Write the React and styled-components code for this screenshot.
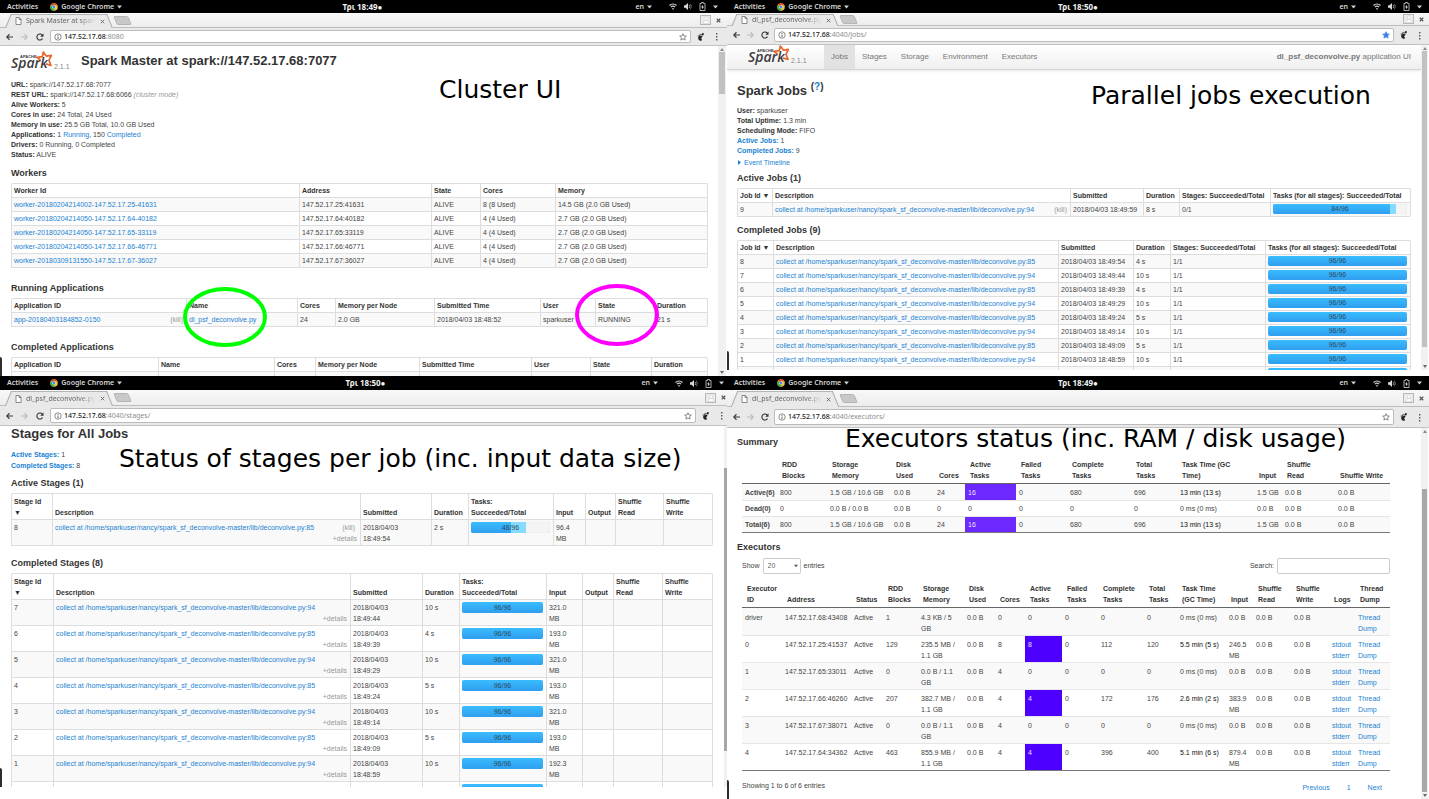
import React from "react";
import styled, { createGlobalStyle, css } from "styled-components";

const GlobalStyle = createGlobalStyle`
  * { box-sizing: border-box; }
  body { margin: 0; background: #fff; }
  button, input, select { font: inherit; color: inherit; }
`;

const LINK = "#1a82d2";
const UI_FONT = `"Noto Sans", "Open Sans", sans-serif`;
const PAGE_FONT = `"Liberation Sans", Arial, sans-serif`;

/* ---------- page frame ---------- */

const Board = styled.main`
  display: grid;
  grid-template-columns: minmax(0, 727fr) minmax(0, 702fr);
  grid-template-rows: minmax(0, 376fr) minmax(0, 423fr);
  height: 100vh;
  background: #fff;
`;

const Screen = styled.section`
  position: relative;
  display: flex;
  flex-direction: column;
  min-width: 0;
  overflow: hidden;
  background: #fff;
`;

const Caption = styled.h1`
  position: absolute;
  top: ${(p) => p.$top}px;
  left: ${(p) => p.$left}px;
  margin: 0;
  font: 400 25px/30px "DejaVu Sans", sans-serif;
  color: #000;
  white-space: nowrap;
`;

const Ring = styled.svg`
  position: absolute;
  top: ${(p) => p.$top}px;
  left: ${(p) => p.$left}px;
  overflow: visible;
`;

const EdgeMark = styled.span`
  position: absolute;
  left: 0;
  bottom: ${(p) => p.$bottom}px;
  width: 2px;
  height: 19px;
  border-radius: 0 2px 0 0;
  background: #2c2f30;
`;

/* ---------- desktop top bar ---------- */

const TopBar = styled.header`
  flex: none;
  display: grid;
  grid-template-columns: 1fr auto 1fr;
  align-items: center;
  height: ${(p) => p.$h}px;
  padding: 0 ${(p) => p.$end}px 0 7px;
  background: #000;
  color: #d6d6d6;
  font: 600 7px/12px ${UI_FONT};
`;

const BarGroup = styled.div`
  display: flex;
  align-items: center;
  justify-content: ${(p) => (p.$right ? "flex-end" : "flex-start")};
  gap: ${(p) => p.$gap}px;
`;

const BarButton = styled.button`
  display: flex;
  align-items: center;
  gap: 3px;
  padding: 0;
  border: 0;
  background: none;
  white-space: nowrap;
`;

const Language = styled(BarButton)`
  margin-right: 10px;
`;

const Clock = styled.time`
  color: #f2f2f2;
  font-size: 8px;
  font-weight: 700;
  white-space: nowrap;
`;

/* ---------- browser chrome ---------- */

const TabStrip = styled.div`
  flex: none;
  display: flex;
  align-items: center;
  height: ${(p) => p.$h}px;
  padding: 0 ${(p) => p.$end}px 0 ${(p) => p.$start}px;
  background: linear-gradient(#f8f8f8, #ededed);
  border-bottom: 1px solid #bdbdbd;
`;

const Tab = styled.div`
  position: relative;
  isolation: isolate;
  display: flex;
  align-items: center;
  gap: 4px;
  align-self: stretch;
  width: 102px;
  margin-bottom: -1px;
  padding: 1px 5px 0 7px;
  color: #666;
  font: 400 7px/12px ${UI_FONT};
  &::before,
  &::after {
    content: "";
    position: absolute;
    z-index: -1;
    top: 1px;
    bottom: 0;
    background: #e9e9e9;
    border-top: 1px solid #b5b5b5;
  }
  &::before {
    left: 0;
    right: 40%;
    border-left: 1px solid #a9a9a9;
    transform: skewX(-22deg);
  }
  &::after {
    left: 40%;
    right: 0;
    border-right: 1px solid #a9a9a9;
    transform: skewX(22deg);
  }
`;

const TabTitle = styled.span`
  flex: 1;
  overflow: hidden;
  white-space: nowrap;
  mask-image: linear-gradient(90deg, #000 75%, transparent);
`;

const IconButton = styled.button`
  display: flex;
  padding: 0;
  border: 0;
  background: none;
`;

const NewTab = styled.button`
  width: 15px;
  height: 9px;
  margin-left: 5px;
  padding: 0;
  border: 1px solid #b5b5b5;
  border-radius: 2px;
  background: #c8c8c8;
  transform: skewX(22deg);
`;

const WindowTools = styled.div`
  display: flex;
  align-items: center;
  gap: 5px;
  margin-left: auto;
`;

const Avatar = styled.button`
  display: flex;
  align-items: center;
  justify-content: center;
  width: 11px;
  height: 10px;
  padding: 0;
  border: 1px solid #b8b8b8;
  background: #ececec;
`;

const Toolbar = styled.div`
  flex: none;
  display: flex;
  align-items: center;
  gap: ${(p) => p.$gap}px;
  height: ${(p) => p.$h}px;
  padding-left: 6px;
  background: #e9e9e9;
  border-bottom: 1px solid #c2c2c2;
`;

const UrlBox = styled.form`
  flex: 1;
  display: flex;
  align-items: center;
  align-self: stretch;
  gap: 2px;
  margin: 2px 0 2px -2px;
  padding: 0 3px;
  border: 1px solid #bcbcbc;
  border-radius: 2px;
  background: #fff;
  font: 400 7px/12px ${UI_FONT};
`;

const UrlText = styled.span`
  flex: 1;
  color: #8c8c8c;
  b { color: #222; font-weight: 500; }
`;

const ToolTail = styled.div`
  display: flex;
  align-items: center;
  gap: 11px;
  width: ${(p) => p.$w}px;
  margin-left: -${(p) => p.$pull}px;
  padding-left: 6px;
`;

/* ---------- page view ---------- */

const View = styled.div`
  flex: 1;
  display: flex;
  min-height: 0;
  margin-bottom: ${(p) => p.$cut || 0}px;
`;

const Page = styled.div`
  flex: 1;
  min-width: 0;
  overflow: hidden;
  font: 400 7px/10px ${PAGE_FONT};
  color: #444;
`;

const Content = styled.div`
  padding: ${(p) => p.$top}px ${(p) => p.$right}px 0 ${(p) => p.$left}px;
`;

const Scrollbar = styled.div`
  flex: none;
  display: flex;
  flex-direction: column;
  align-items: center;
  justify-content: space-between;
  width: ${(p) => p.$w}px;
  margin-right: ${(p) => p.$gap}px;
  padding: 2px 0;
  background: #f1f1f1;
`;

const Thumb = styled.span`
  align-self: stretch;
  flex: ${(p) => p.$share} 0 0;
  margin: 0 ${(p) => p.$inset}px;
  background: ${(p) => p.$color};
`;

const Space = styled.span`
  flex: ${(p) => p.$share} 0 0;
`;

/* ---------- spark page pieces ---------- */

const A = styled.a`
  color: ${(p) => (p.$muted ? "#999" : LINK)};
  text-decoration: none;
`;

const MasterHead = styled.div`
  display: flex;
  align-items: center;
  height: 30px;
  margin-bottom: 4px;
`;

const Brand = styled.div`
  display: flex;
  align-items: flex-end;
  gap: 2px;
  width: 70px;
  color: #888;
`;

const PageTitle = styled.h2`
  margin: 0 0 ${(p) => p.$after || 0}px;
  font: 700 13px/16px ${PAGE_FONT};
  color: #333;
  sup { font-size: 10px; line-height: 0; }
`;

const Facts = styled.ul`
  margin: 0 0 ${(p) => p.$after}px;
  padding: 0;
  list-style: none;
  line-height: ${(p) => p.$line}px;
  b { color: #333; }
  em { color: #999; }
`;

const Heading = styled.h3`
  margin: ${(p) => p.$gap || 0}px 0 0;
  font: 700 9px/20px ${PAGE_FONT};
  color: #333;
`;

const Navbar = styled.nav`
  display: flex;
  align-items: stretch;
  height: 25px;
  padding: 0 10px 0 21px;
  border-bottom: 1px solid #d4d4d4;
  background: linear-gradient(#fff, #efefef);
  box-shadow: 0 1px 3px #0000001a;
  font-size: 8px;
`;

const NavBrand = styled.div`
  display: flex;
  align-items: flex-end;
  gap: 2px;
  width: 76px;
  padding-bottom: 3px;
  color: #888;
  font-size: 7px;
`;

const NavLink = styled.a`
  display: flex;
  align-items: center;
  padding: 0 7px;
  color: #777;
  text-decoration: none;
  background: ${(p) => (p.$active ? "#e2e2e2" : "none")};
`;

const AppName = styled.p`
  margin: 0 0 0 auto;
  align-self: center;
  color: #777;
`;

const DataTable = styled.table`
  width: 100%;
  table-layout: fixed;
  border-spacing: 0;
  border: 1px solid #ddd;
  border-left: 0;
  border-bottom: 0;
  border-radius: 2px;
  line-height: ${(p) => p.$line}px;
  th,
  td {
    padding: ${(p) => p.$pad}px 3px ${(p) => p.$pad - 1}px 2px;
    border-left: 1px solid #ddd;
    border-bottom: 1px solid #ddd;
    text-align: left;
    white-space: nowrap;
  }
  th { color: #333; vertical-align: bottom; }
  td { vertical-align: top; }
  tbody tr:nth-child(odd) { background: #f9f9f9; }
`;

const Col = styled.col`
  ${(p) => p.$w && css`width: ${p.$w}px;`}
`;

const Spread = styled.span`
  display: flex;
  justify-content: space-between;
  padding-right: ${(p) => p.$end || 0}px;
`;

const Details = styled.button`
  display: block;
  margin-left: auto;
  padding: 0;
  border: 0;
  background: none;
  color: #999;
  line-height: inherit;
`;

const Track = styled.div`
  position: relative;
  height: ${(p) => p.$h}px;
  overflow: hidden;
  border-radius: 2px;
  background: #f4f4f4;
  box-shadow: inset 0 0 1px #0003;
  text-align: center;
  line-height: ${(p) => p.$h}px;
`;

const Fill = styled.span`
  position: absolute;
  inset: 0 auto 0 0;
  background: ${(p) => (p.$started ? "#86dcff" : "linear-gradient(#39bcff, #309eee)")};
`;

const FillLabel = styled.span`
  position: relative;
  color: #2d4a62;
`;

const PlainTable = styled.table`
  width: 100%;
  table-layout: fixed;
  border-spacing: 0;
  border-bottom: 1px solid #777;
  line-height: 11px;
  th,
  td { text-align: left; vertical-align: top; white-space: nowrap; }
  thead th {
    padding: 1px 0 2px 5px;
    border-bottom: 1px solid #666;
    color: #333;
    vertical-align: bottom;
  }
  tbody th,
  tbody td {
    padding: ${(p) => p.$pad}px 0 ${(p) => 4 - p.$pad}px 3px;
    border-top: 1px solid #e6e6e6;
  }
  tbody tr:first-child > * { border-top-color: transparent; }
  tbody tr:nth-child(odd) { background: #f9f9f9; }
`;

const HotCell = styled.td`
  background: ${(p) => p.$tone};
  color: #ece4ff;
`;

const TimeCell = styled.td`
  color: ${(p) => (p.$strong ? "#111" : "#444")};
`;

const Controls = styled.div`
  display: flex;
  justify-content: space-between;
  height: 16px;
  margin-bottom: 8px;
`;

const Field = styled.label`
  display: flex;
  align-items: center;
  gap: 3px;
`;

const Select = styled.select`
  width: 38px;
  height: 16px;
  padding: 0 0 0 4px;
  border: 1px solid #ccc;
  border-radius: 2px;
  background: #fff;
  color: #666;
  appearance: none;
`;

const SelectWrap = styled.span`
  position: relative;
  display: flex;
  svg { position: absolute; right: 3px; top: 6px; pointer-events: none; }
`;

const SearchBox = styled.input`
  width: 113px;
  height: 16px;
  border: 1px solid #ccc;
  border-radius: 2px;
`;

const Footer = styled.div`
  display: flex;
  justify-content: space-between;
  padding-top: 10px;
`;

const Pager = styled.nav`
  display: flex;
  gap: 17px;
  padding: 2px 8px 0 0;
`;

/* ---------- icons ---------- */

const Caret = ({ color = "#cfcfcf", w = 5 }) => (
  <svg width={w} height="4" viewBox="0 0 5 4" aria-hidden="true">
    <path d="M0 .4h5L2.500 3.600z" fill={color} />
  </svg>
);

const ChromeIcon = () => (
  <svg width="8" height="8" viewBox="0 0 16 16" aria-hidden="true">
    <circle cx="8" cy="8" r="7.600" fill="#f6c324" />
    <path d="M8 8 1.400 4.200A7.600 7.600 0 0 1 14.800 4.600H8z" fill="#dd4b3a" />
    <path d="M8 8 1.400 4.200A7.600 7.600 0 0 0 7 15.500L11 9.500z" fill="#3aa757" />
    <circle cx="8" cy="8" r="3.600" fill="#fff" />
    <circle cx="8" cy="8" r="2.800" fill="#4688f1" />
  </svg>
);

const WifiIcon = () => (
  <svg width="8" height="7" viewBox="0 0 16 14" aria-hidden="true">
    <path d="M1 5a10 10 0 0 1 14 0" fill="none" stroke="#d0d0d0" strokeWidth="2.600" />
    <path d="M4 8a6 6 0 0 1 8 0" fill="none" stroke="#d0d0d0" strokeWidth="2.400" />
    <path d="M8 14 5.500 10.500h5z" fill="#d0d0d0" />
  </svg>
);

const VolumeIcon = () => (
  <svg width="8" height="7" viewBox="0 0 16 14" aria-hidden="true">
    <path d="M0 4.500h3L8 0v14L3 9.500H0z" fill="#d8d8d8" />
    <path d="M10 4a4 4 0 0 1 0 6" fill="none" stroke="#bbb" strokeWidth="1.800" />
    <path d="M12.500 1.500a8 8 0 0 1 0 11" fill="none" stroke="#777" strokeWidth="1.800" />
  </svg>
);

const BatteryIcon = () => (
  <svg width="7" height="9" viewBox="0 0 14 18" aria-hidden="true">
    <path d="M5 1h4v2h3v14H2V3h3z" fill="none" stroke="#bdbdbd" strokeWidth="1.800" />
    <path d="M8 5.500 4 10.500h2.500L6 14.500l4-5H7.500z" fill="#eee" />
  </svg>
);

const FileIcon = () => (
  <svg width="7" height="8" viewBox="0 0 14 16" aria-hidden="true">
    <path d="M2 1h6.500L12 4.500V15H2z M8 1v4h4" fill="#fff" stroke="#6e6e6e" strokeWidth="1.600" />
  </svg>
);

const CrossIcon = ({ w = 1.6 }) => (
  <svg width="5" height="5" viewBox="0 0 10 10" aria-hidden="true">
    <path d="M1.500 1.500l7 7M8.500 1.500l-7 7" stroke="#555" strokeWidth={w} />
  </svg>
);

const ArrowIcon = ({ flip }) => (
  <svg width="7" height="8" viewBox="0 0 14 16" aria-hidden="true">
    <path
      d={flip ? "M0 8h12M7 2.500 12.500 8 7 13.500" : "M14 8H2M7 2.500 1.500 8 7 13.500"}
      fill="none"
      stroke={flip ? "#bcbcbc" : "#3a3a3a"}
      strokeWidth="2.200"
    />
  </svg>
);

const ReloadIcon = () => (
  <svg width="8" height="8" viewBox="0 0 16 16" aria-hidden="true">
    <path d="M13 11a6 6 0 1 1 0-6" fill="none" stroke="#333" strokeWidth="2.200" />
    <path d="M15 1v6.500H8.500z" fill="#333" />
  </svg>
);

const InfoIcon = () => (
  <svg width="8" height="8" viewBox="0 0 16 16" aria-hidden="true">
    <circle cx="8" cy="8" r="6.400" fill="none" stroke="#666" strokeWidth="1.500" />
    <path d="M8 7v5M8 4v1.800" stroke="#555" strokeWidth="1.800" />
  </svg>
);

const StarIcon = ({ on }) => (
  <svg width="8" height="8" viewBox="0 0 16 16" aria-hidden="true">
    <path
      d="M8 1.500l1.900 4.400 4.800.4-3.600 3.200 1.100 4.700L8 11.700l-4.200 2.500 1.100-4.700L1.300 6.300l4.800-.4z"
      fill={on ? "#3b7de0" : "#fff"}
      stroke={on ? "#3b7de0" : "#666"}
      strokeWidth="1.500"
    />
  </svg>
);

const FootIcon = () => (
  <svg width="7" height="8" viewBox="0 0 14 16" aria-hidden="true">
    <path d="M10.500 6C8 4.600 2 6 2.200 10c.2 3 2.600 5.600 5 5.600 2 0 3-1.600 2.600-2.800-.5-1.200-2-1-1.600-2.200.5-1.200 3.600-2 2.300-4.600z" fill="#222" />
    <ellipse cx="11.600" cy="2.600" rx="1.900" ry="2.500" fill="#222" transform="rotate(15 11.600 2.600)" />
    <ellipse cx="7.800" cy="3.200" rx="1.200" ry="1.700" fill="#222" />
    <ellipse cx="4.900" cy="4.300" rx="1" ry="1.500" fill="#222" />
    <ellipse cx="2.300" cy="6" rx=".9" ry="1.300" fill="#222" />
  </svg>
);

const DotsIcon = () => (
  <svg width="3" height="9" viewBox="0 0 3 9" aria-hidden="true">
    <path d="M1 1h1.400v1.400H1zM1 4h1.400v1.400H1zM1 7h1.400v1.400H1z" fill="#555" />
  </svg>
);

const PersonIcon = () => (
  <svg width="8" height="8" viewBox="0 0 16 16" aria-hidden="true">
    <circle cx="8" cy="5" r="3.500" fill="#fff" stroke="#c4c4c4" />
    <path d="M2 15c0-8 12-8 12 0z" fill="#fff" stroke="#c4c4c4" />
  </svg>
);

const SparkLogo = () => (
  <svg width="41" height="21" viewBox="0 0 41 21" role="img" aria-label="Apache Spark">
    <path
      d="M29.500 9 26 6.300l5.300-.6L32.300 1l3.200 4.200 5-.8-2.500 4.800 2 5.300-5-1.600"
      fill="#fff"
      stroke="#e8662c"
      strokeWidth="1.700"
      strokeLinejoin="round"
    />
    <text x="0" y="17" fontFamily="Open Sans, Noto Sans, sans-serif" fontStyle="italic" fontWeight="600" fontSize="14" fill="#3c3a3e">
      Spark
    </text>
    <text x="9" y="7" fontFamily="Liberation Sans, sans-serif" fontWeight="700" fontSize="4" fill="#3c3a3e">
      APACHE
    </text>
  </svg>
);

/* ---------- shared composites ---------- */

function Browser({ caption, time, title, host = "147.52.17.68", path, starred, size, children }) {
  return (
    <Screen aria-label={caption}>
      <TopBar $h={size.bar} $end={size.end}>
        <BarGroup $gap={12}>
          <BarButton>Activities</BarButton>
          <BarButton><ChromeIcon />Google Chrome<Caret /></BarButton>
        </BarGroup>
        <Clock>{time}●</Clock>
        <BarGroup $right $gap={7}>
          <Language>en<Caret /></Language>
          <WifiIcon />
          <VolumeIcon />
          <BatteryIcon />
          <Caret />
        </BarGroup>
      </TopBar>
      <TabStrip $h={size.tabs} $start={size.gap} $end={size.close}>
        <Tab>
          <FileIcon />
          <TabTitle>{title}</TabTitle>
          <IconButton aria-label="Close tab"><CrossIcon /></IconButton>
        </Tab>
        <NewTab aria-label="New tab" />
        <WindowTools>
          <Avatar aria-label="Profile"><PersonIcon /></Avatar>
          <IconButton aria-label="Close window"><CrossIcon w={2.4} /></IconButton>
        </WindowTools>
      </TabStrip>
      <Toolbar $h={size.tool} $gap={size.gap}>
        <IconButton aria-label="Back"><ArrowIcon /></IconButton>
        <IconButton aria-label="Forward"><ArrowIcon flip /></IconButton>
        <IconButton aria-label="Reload"><ReloadIcon /></IconButton>
        <UrlBox>
          <InfoIcon />
          <UrlText><b>{host}</b>{path}</UrlText>
          <StarIcon on={starred} />
        </UrlBox>
        <ToolTail $w={size.tail} $pull={size.gap}>
          <FootIcon />
          <DotsIcon />
        </ToolTail>
      </Toolbar>
      {children}
    </Screen>
  );
}

function Scroll({ before, share, after, color = "#c1c1c1", w = 8, gap = 1, inset = 1, arrows = true }) {
  return (
    <Scrollbar $w={w} $gap={gap}>
      {arrows && <svg width="4" height="3" viewBox="0 0 4 3"><path d="M0 3h4L2 0z" fill="#888" /></svg>}
      <Space $share={before} />
      <Thumb $share={share} $color={color} $inset={inset} />
      <Space $share={after} />
      {arrows && <svg width="4" height="3" viewBox="0 0 4 3"><path d="M0 0h4L2 3z" fill="#666" /></svg>}
    </Scrollbar>
  );
}

function Grid({ cols, heads, rows, line, pad }) {
  return (
    <DataTable $line={line} $pad={pad}>
      <colgroup>{cols.map((w, i) => <Col key={i} $w={w} />)}</colgroup>
      <thead><tr>{heads.map((h, i) => <th key={i} scope="col">{h}</th>)}</tr></thead>
      <tbody>
        {rows.map((r, i) => <tr key={i}>{r.map((c, j) => <td key={j}>{c}</td>)}</tr>)}
      </tbody>
    </DataTable>
  );
}

function Progress({ done, running = 0, total = 96, h }) {
  return (
    <Track $h={h}>
      {running > 0 && <Fill $started style={{ width: `${((done + running) / total) * 100}%` }} />}
      <Fill style={{ width: `${(done / total) * 100}%` }} />
      <FillLabel>{done}/{total}</FillLabel>
    </Track>
  );
}

const two = (a, b) => <>{a}<br />{b}</>;
const collect = (line) => (
  <A href="#job">collect at /home/sparkuser/nancy/spark_sf_deconvolve-master/lib/deconvolve.py:{line}</A>
);

/* ---------- cluster page ---------- */

const workers = [
  ["20180204214002", "147.52.17.25", "41631", "8 (8 Used)", "14.5 GB (2.0 GB Used)"],
  ["20180204214050", "147.52.17.64", "40182", "4 (4 Used)", "2.7 GB (2.0 GB Used)"],
  ["20180204214050", "147.52.17.65", "33119", "4 (4 Used)", "2.7 GB (2.0 GB Used)"],
  ["20180204214050", "147.52.17.66", "46771", "4 (4 Used)", "2.7 GB (2.0 GB Used)"],
  ["20180309131550", "147.52.17.67", "36027", "4 (4 Used)", "2.7 GB (2.0 GB Used)"],
];
const appHeads = ["Application ID", "Name", "Cores", "Memory per Node", "Submitted Time", "User", "State", "Duration"];

function ClusterScreen() {
  return (
    <Browser
      caption="Cluster UI" time="Τρι 18:49" title="Spark Master at spark" path=":8080"
      size={{ bar: 13, tabs: 15, tool: 18, gap: 8, end: 9, close: 6, tail: 36 }}
    >
      <View>
        <Page>
          <Content $top={0} $left={11} $right={10}>
            <MasterHead>
              <Brand><SparkLogo />2.1.1</Brand>
              <PageTitle>Spark Master at spark://147.52.17.68:7077</PageTitle>
            </MasterHead>
            <Facts $line={10} $after={3}>
              <li><b>URL:</b> spark://147.52.17.68:7077</li>
              <li><b>REST URL:</b> spark://147.52.17.68:6066 <em>(cluster mode)</em></li>
              <li><b>Alive Workers:</b> 5</li>
              <li><b>Cores in use:</b> 24 Total, 24 Used</li>
              <li><b>Memory in use:</b> 25.5 GB Total, 10.0 GB Used</li>
              <li><b>Applications:</b> 1 <A href="#running">Running</A>, 150 <A href="#completed">Completed</A></li>
              <li><b>Drivers:</b> 0 Running, 0 Completed</li>
              <li><b>Status:</b> ALIVE</li>
            </Facts>
            <Heading>Workers</Heading>
            <Grid
              line={12} pad={1} cols={[null, 132, 49, 75, 152]}
              heads={["Worker Id", "Address", "State", "Cores", "Memory"]}
              rows={workers.map(([stamp, ip, port, cores, mem]) => [
                <A href="#worker">worker-{stamp}-{ip}-{port}</A>, `${ip}:${port}`, "ALIVE", cores, mem,
              ])}
            />
            <Heading $gap={10}>Running Applications</Heading>
            <Grid
              line={12} pad={1} cols={[null, 111, 38, 99, 106, 55, 59, 53]}
              heads={appHeads}
              rows={[[
                <Spread><A href="#app">app-20180403184852-0150</A><A $muted href="#kill">(kill)</A></Spread>,
                <A href="#name">dl_psf_deconvolve.py</A>, "24", "2.0 GB", "2018/04/03 18:48:52", "sparkuser", "RUNNING", "21 s",
              ]]}
            />
            <Heading $gap={10}>Completed Applications</Heading>
            <Grid
              line={12} pad={1} cols={[null, 116, 41, 104, 112, 59, 61, 56]}
              heads={appHeads}
              rows={[[
                <A href="#app">app-20180403184622-0149</A>, "dl_psf_deconvolve.py", "24", "2.0 GB",
                "2018/04/03 18:46:22", "sparkuser", "FINISHED", "1.3 min",
              ]]}
            />
          </Content>
        </Page>
        <Scroll before={1} share={42} after={277} />
      </View>
      <Ring width="84" height="60" $top={287} $left={183} aria-hidden="true">
        <ellipse cx="42" cy="30" rx="40" ry="28" fill="none" stroke="#00ff00" strokeWidth="4" />
      </Ring>
      <Ring width="84" height="62" $top={284} $left={575} aria-hidden="true">
        <ellipse cx="42" cy="31" rx="40" ry="29" fill="none" stroke="#ff00ff" strokeWidth="4" />
      </Ring>
      <Caption $top={75} $left={439}>Cluster UI</Caption>
      <EdgeMark $bottom={0} />
    </Browser>
  );
}

/* ---------- jobs page ---------- */

const jobHeads = ["Job Id ▼", "Description", "Submitted", "Duration", "Stages: Succeeded/Total", "Tasks (for all stages): Succeeded/Total"];
const jobs = [
  [8, 85, "49:54", "4 s"], [7, 94, "49:44", "10 s"], [6, 85, "49:39", "4 s"], [5, 94, "49:29", "10 s"],
  [4, 85, "49:24", "5 s"], [3, 94, "49:14", "10 s"], [2, 85, "49:09", "5 s"], [1, 94, "48:59", "10 s"], [0, 85, "48:54", "5 s"],
];

function JobsScreen() {
  return (
    <Browser
      caption="Parallel jobs execution" time="Τρι 18:50" title="dl_psf_deconvolve.py" path=":4040/jobs/" starred
      size={{ bar: 13, tabs: 13, tool: 19, gap: 7, end: 7, close: 5, tail: 35 }}
    >
      <View $cut={6}>
        <Page>
          <Navbar>
            <NavBrand><SparkLogo />2.1.1</NavBrand>
            <NavLink $active href="#jobs">Jobs</NavLink>
            <NavLink href="#stages">Stages</NavLink>
            <NavLink href="#storage">Storage</NavLink>
            <NavLink href="#environment">Environment</NavLink>
            <NavLink href="#executors">Executors</NavLink>
            <AppName><b>dl_psf_deconvolve.py</b> application UI</AppName>
          </Navbar>
          <Content $top={13} $left={10} $right={10}>
            <PageTitle $after={7}>Spark Jobs <sup>(<A href="#help">?</A>)</sup></PageTitle>
            <Facts $line={10} $after={2}>
              <li><b>User:</b> sparkuser</li>
              <li><b>Total Uptime:</b> 1.3 min</li>
              <li><b>Scheduling Mode:</b> FIFO</li>
              <li><b><A href="#active">Active Jobs:</A></b> 1</li>
              <li><b><A href="#completed">Completed Jobs:</A></b> 9</li>
            </Facts>
            <A href="#timeline">
              <svg width="7" height="5" viewBox="0 0 7 5"><path d="M1 0v5l3-2.500z" fill={LINK} /></svg>Event Timeline
            </A>
            <Heading>Active Jobs (1)</Heading>
            <Grid
              line={12} pad={1} cols={[35, null, 73, 36, 91, 140]} heads={jobHeads}
              rows={[[
                "9", <Spread>{collect(94)}<A $muted href="#kill">(kill)</A></Spread>,
                "2018/04/03 18:49:59", "8 s", "0/1", <Progress h={10} done={84} running={4} />,
              ]]}
            />
            <Heading $gap={3}>Completed Jobs (9)</Heading>
            <Grid
              line={12} pad={1} cols={[36, null, 75, 37, 95, 145]} heads={jobHeads}
              rows={jobs.map(([id, ln, t, d]) => [id, collect(ln), `2018/04/03 18:${t}`, d, "1/1", <Progress h={10} done={96} />])}
            />
          </Content>
        </Page>
        <Scroll w={7} before={1} share={293} after={18} />
      </View>
      <Caption $top={81} $left={364}>Parallel jobs execution</Caption>
      <EdgeMark $bottom={6} />
    </Browser>
  );
}

/* ---------- stages page ---------- */

const stageHeads = [
  two("Stage Id", "▼"), "Description", "Submitted", "Duration", two("Tasks:", "Succeeded/Total"),
  "Input", "Output", two("Shuffle", "Read"), two("Shuffle", "Write"),
];
const stages = [
  [7, 94, "18:49:44", "10 s", "321.0"], [6, 85, "18:49:39", "4 s", "193.0"], [5, 94, "18:49:29", "10 s", "321.0"],
  [4, 85, "18:49:24", "5 s", "193.0"], [3, 94, "18:49:14", "10 s", "321.0"], [2, 85, "18:49:09", "5 s", "193.0"],
  [1, 94, "18:48:59", "10 s", "192.3"], [0, 85, "18:48:54", "5 s", "193.0"],
];

function StagesScreen() {
  return (
    <Browser
      caption="Status of stages per job" time="Τρι 18:50" title="dl_psf_deconvolve.py" path=":4040/stages/"
      size={{ bar: 14, tabs: 16, tool: 20, gap: 8, end: 3, close: 1, tail: 31 }}
    >
      <View $cut={12}>
        <Page>
          <Content $top={0} $left={11} $right={11}>
            <PageTitle $after={7}>Stages for All Jobs</PageTitle>
            <Facts $line={11} $after={2}>
              <li><b><A href="#active">Active Stages:</A></b> 1</li>
              <li><b><A href="#completed">Completed Stages:</A></b> 8</li>
            </Facts>
            <Heading>Active Stages (1)</Heading>
            <Grid
              line={11} pad={2} cols={[41, null, 71, 37, 85, 32, 30, 48, 49]} heads={stageHeads}
              rows={[[
                "8", <><Spread $end={2}>{collect(85)}<A $muted href="#kill">(kill)</A></Spread><Details>+details</Details></>,
                two("2018/04/03", "18:49:54"), "2 s", <Progress h={11} done={48} running={19} />, two("96.4", "MB"), "", "", "",
              ]]}
            />
            <Heading $gap={7}>Completed Stages (8)</Heading>
            <Grid
              line={11} pad={2} cols={[42, null, 72, 37, 87, 36, 31, 49, 50]} heads={stageHeads}
              rows={stages.map(([id, ln, t, d, mb]) => [
                id, <>{collect(ln)}<Details>+details</Details></>, two("2018/04/03", t), d,
                <Progress h={11} done={96} />, two(mb, "MB"), "", "", "",
              ])}
            />
          </Content>
        </Page>
        <Scroll w={3} gap={0} inset={0} arrows={false} before={40} share={286} after={34} color="#a6a6a6" />
      </View>
      <Caption $top={68} $left={119}>Status of stages per job (inc. input data size)</Caption>
      <EdgeMark $bottom={12} />
    </Browser>
  );
}

/* ---------- executors page ---------- */

const summaryCols = [35, 50, 64, 43, 31, 51, 51, 64, 46, 77, 28, 53, null];
const summaryHeads = [
  "", two("RDD", "Blocks"), two("Storage", "Memory"), two("Disk", "Used"), "Cores", two("Active", "Tasks"),
  two("Failed", "Tasks"), two("Complete", "Tasks"), two("Total", "Tasks"), two("Task Time (GC", "Time)"),
  "Input", two("Shuffle", "Read"), "Shuffle Write",
];
const summary = [
  ["Active(6)", "800", "1.5 GB / 10.6 GB", "0.0 B", "24", "16", "0", "680", "696", "13 min (13 s)", "1.5 GB", "0.0 B", "0.0 B"],
  ["Dead(0)", "0", "0.0 B / 0.0 B", "0.0 B", "0", "0", "0", "0", "0", "0 ms (0 ms)", "0.0 B", "0.0 B", "0.0 B"],
  ["Total(6)", "800", "1.5 GB / 10.6 GB", "0.0 B", "24", "16", "0", "680", "696", "13 min (13 s)", "1.5 GB", "0.0 B", "0.0 B"],
];

const execCols = [40, 69, 32, 35, 46, 31, 30, 37, 36, 46, 33, 49, 27, 38, 38, 26, null];
const execHeads = [
  two("Executor", "ID"), "Address", "Status", two("RDD", "Blocks"), two("Storage", "Memory"), two("Disk", "Used"),
  "Cores", two("Active", "Tasks"), two("Failed", "Tasks"), two("Complete", "Tasks"), two("Total", "Tasks"),
  two("Task Time", "(GC Time)"), "Input", two("Shuffle", "Read"), two("Shuffle", "Write"), "Logs", two("Thread", "Dump"),
];
const executors = [
  ["driver", "147.52.17.68:43408", "1", ["4.3 KB / 5", "GB"], "0", "0", "0", "0", "0 ms (0 ms)", ["0.0 B"]],
  ["0", "147.52.17.25:41537", "129", ["235.5 MB /", "1.1 GB"], "8", "8", "112", "120", "5.5 min (5 s)", ["246.5", "MB"]],
  ["1", "147.52.17.65:33011", "0", ["0.0 B / 1.1", "GB"], "4", "0", "0", "0", "0 ms (0 ms)", ["0.0 B"]],
  ["2", "147.52.17.66:46260", "207", ["382.7 MB /", "1.1 GB"], "4", "4", "172", "176", "2.6 min (2 s)", ["383.9", "MB"]],
  ["3", "147.52.17.67:38071", "0", ["0.0 B / 1.1", "GB"], "4", "0", "0", "0", "0 ms (0 ms)", ["0.0 B"]],
  ["4", "147.52.17.64:34362", "463", ["855.9 MB /", "1.1 GB"], "4", "4", "396", "400", "5.1 min (6 s)", ["879.4", "MB"]],
];

const Active = ({ value, tone }) => (value === "0" ? <td>0</td> : <HotCell $tone={tone}>{value}</HotCell>);
const TaskTime = ({ value }) => <TimeCell $strong={value.includes("min")}>{value}</TimeCell>;

function ExecutorsScreen() {
  return (
    <Browser
      caption="Executors status" time="Τρι 18:49" title="dl_psf_deconvolve.py" path=":4040/executors/"
      size={{ bar: 14, tabs: 17, tool: 21, gap: 7, end: 7, close: 5, tail: 35 }}
    >
      <View>
        <Page>
          <Content $top={4} $left={10} $right={31}>
            <Heading>Summary</Heading>
          </Content>
          <Content $top={6} $left={15} $right={31}>
            <PlainTable $pad={2}>
              <colgroup>{summaryCols.map((w, i) => <Col key={i} $w={w} />)}</colgroup>
              <thead><tr>{summaryHeads.map((h, i) => <th key={i} scope="col">{h}</th>)}</tr></thead>
              <tbody>
                {summary.map(([name, ...c]) => (
                  <tr key={name}>
                    <th scope="row">{name}</th>
                    {c.map((v, i) =>
                      i === 4 ? <Active key={i} value={v} tone="#6b28ff" /> : i === 8 ? <TaskTime key={i} value={v} /> : <td key={i}>{v}</td>
                    )}
                  </tr>
                ))}
              </tbody>
            </PlainTable>
          </Content>
          <Content $top={4} $left={10} $right={31}>
            <Heading>Executors</Heading>
          </Content>
          <Content $top={1} $left={15} $right={31}>
            <Controls>
              <Field>
                Show
                <SelectWrap>
                  <Select defaultValue="20"><option>20</option><option>40</option><option>60</option></Select>
                  <Caret color="#555" w={4} />
                </SelectWrap>
                entries
              </Field>
              <Field>Search: <SearchBox type="search" /></Field>
            </Controls>
            <PlainTable $pad={3}>
              <colgroup>{execCols.map((w, i) => <Col key={i} $w={w} />)}</colgroup>
              <thead><tr>{execHeads.map((h, i) => <th key={i} scope="col">{h}</th>)}</tr></thead>
              <tbody>
                {executors.map(([id, addr, rdd, mem, cores, act, comp, total, time, input]) => (
                  <tr key={id}>
                    <td>{id}</td>
                    <td>{addr}</td>
                    <td>Active</td>
                    <td>{rdd}</td>
                    <td>{two(...mem)}</td>
                    <td>0.0 B</td>
                    <td>{cores}</td>
                    <Active value={act} tone="#4d00ff" />
                    <td>0</td>
                    <td>{comp}</td>
                    <td>{total}</td>
                    <TaskTime value={time} />
                    <td>{input.length > 1 ? two(...input) : input[0]}</td>
                    <td>0.0 B</td>
                    <td>0.0 B</td>
                    <td>{id !== "driver" && two(<A href="#stdout">stdout</A>, <A href="#stderr">stderr</A>)}</td>
                    <td><A href="#dump">{two("Thread", "Dump")}</A></td>
                  </tr>
                ))}
              </tbody>
            </PlainTable>
            <Footer>
              Showing 1 to 6 of 6 entries
              <Pager aria-label="Pages">
                <A href="#prev">Previous</A>
                <A href="#1">1</A>
                <A href="#next">Next</A>
              </Pager>
            </Footer>
          </Content>
        </Page>
        <Scroll w={7} before={56} share={301} after={2} color="#a8a8a8" />
      </View>
      <Caption $top={48} $left={118}>Executors status (inc. RAM / disk usage)</Caption>
      <EdgeMark $bottom={0} />
    </Browser>
  );
}

export default function App() {
  return (
    <>
      <GlobalStyle />
      <Board>
        <ClusterScreen />
        <JobsScreen />
        <StagesScreen />
        <ExecutorsScreen />
      </Board>
    </>
  );
}
